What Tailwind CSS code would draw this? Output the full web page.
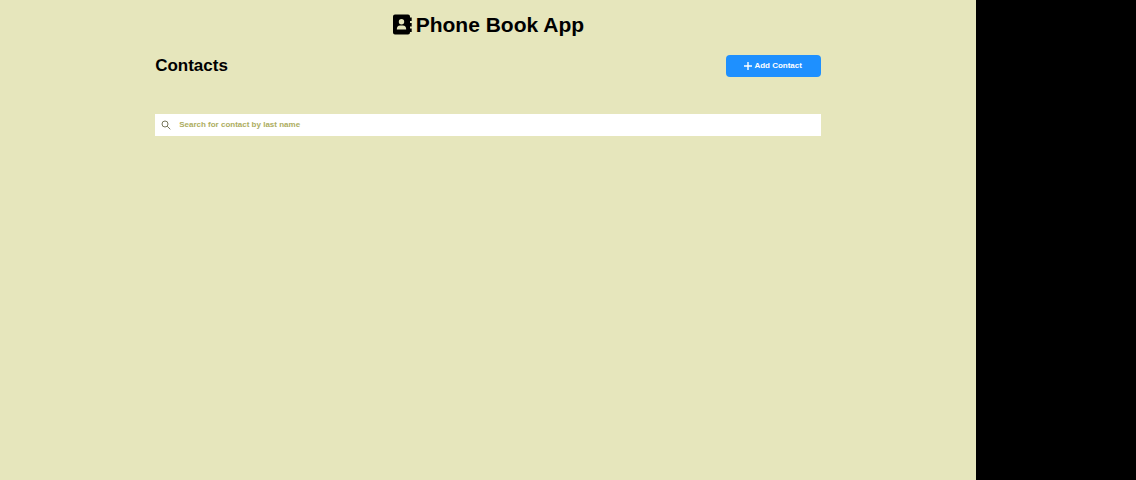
<!DOCTYPE html>
<html lang="en">
<head>
<meta charset="utf-8">
<title>Phone Book App</title>
<script src="https://cdn.jsdelivr.net/npm/@tailwindcss/browser@4"></script>
</head>
<body class="flex min-h-screen bg-black font-['Liberation_Sans',Arial,sans-serif] text-black">
<div class="flex-1 bg-[#e6e6bc]">
  <main class="mx-auto w-[68.2%] pt-3">
    <h1 class="flex items-center justify-center gap-1 text-[21px] leading-[26px] font-bold">
      <svg class="h-[22px] w-5" viewBox="0 0 20 22" fill="currentColor" aria-hidden="true">
        <path fill-rule="evenodd" d="M3 0.500H16Q18 0.500 18 2.500V18.500Q18 20.500 16 20.500H3Q1 20.500 1 18.500V2.500Q1 0.500 3 0.500ZM9.500 5A2.700 2.700 0 1 0 9.500 10.400A2.700 2.700 0 1 0 9.500 5ZM8.200 11.500Q4.800 11.700 4.800 15.500H14.200Q14.200 11.700 10.800 11.500Z"/>
        <path d="M18 3.500H19.700V7H18ZM18 9H19.700V12.500H18ZM18 14.500H19.700V18H18Z"/>
      </svg>
      <span>Phone Book App</span>
    </h1>
    <div class="mt-4 flex items-center justify-between">
      <h2 class="text-[17px] leading-6 font-bold">Contacts</h2>
      <button type="button" class="flex h-[22px] w-[95px] items-center justify-center gap-0.5 rounded-sm bg-[#1e90ff] text-[8px] font-bold text-white">
        <svg class="size-2" viewBox="0 0 8 8" fill="none" stroke="currentColor" stroke-width="1.400" aria-hidden="true"><path d="M4 0V8M0 4H8"/></svg>
        Add Contact
      </button>
    </div>
    <label class="mt-9 flex h-[22px] items-center gap-2 bg-white px-1.5">
      <svg class="size-[10px] text-[#77775c]" viewBox="0 0 10 10" fill="none" stroke="currentColor" aria-hidden="true"><circle cx="4" cy="4" r="3"/><path d="M6.200 6.200L9.300 9.300"/></svg>
      <input type="text" aria-label="Search for contact by last name" placeholder="Search for contact by last name" class="min-w-0 flex-1 text-[8px] font-bold outline-none placeholder:text-[#adad60]">
    </label>
  </main>
</div>
<div class="w-[14.1%] bg-black"></div>
</body>
</html>
